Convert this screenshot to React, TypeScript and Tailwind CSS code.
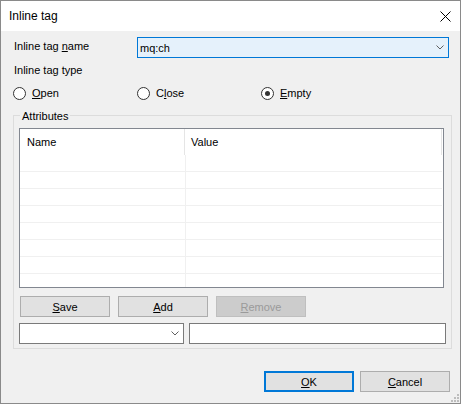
import React from "react";

const font = { fontFamily: '"Liberation Sans", Arial, sans-serif' };

function Chevron() {
  return (
    <svg width="8" height="5" viewBox="0 0 8 5" className="shrink-0">
      <path d="M0.5 0.5 L4 4 L7.5 0.5" fill="none" stroke="#606060" strokeWidth="1" />
    </svg>
  );
}

function Radio({ label, u, checked }: { label: string; u: number; checked?: boolean }) {
  return (
    <div className="flex w-[124px] items-center">
      <div className="flex h-[13px] w-[13px] items-center justify-center rounded-full border border-[#333333] bg-white">
        {checked && <div className="h-[5px] w-[5px] rounded-full bg-[#333333]" />}
      </div>
      <span className="ml-[6px]">
        {label.slice(0, u)}
        <u>{label[u]}</u>
        {label.slice(u + 1)}
      </span>
    </div>
  );
}

function Btn({ label, disabled }: { label: string; disabled?: boolean }) {
  return (
    <div
      className={
        disabled
          ? "flex h-[21px] w-[90px] items-center justify-center border border-[#bfbfbf] bg-[#cccccc] text-[#9a9a9a]"
          : "flex h-[21px] w-[90px] items-center justify-center border border-[#adadad] bg-[#e1e1e1]"
      }
    >
      <span>
        <u>{label[0]}</u>
        {label.slice(1)}
      </span>
    </div>
  );
}

export default function App() {
  const rows = [0, 1, 2, 3, 4, 5, 6];
  return (
    <div
      style={font}
      className="relative flex h-[404px] w-[461px] flex-col border border-[#8a8a8a] bg-[#f0f0f0] text-[11px] leading-[14px] text-black"
    >
      {/* title bar */}
      <div className="flex h-[30px] items-center justify-between bg-white pl-[8px] pr-[9px]">
        <span className="text-[12px]">Inline tag</span>
        <svg width="11" height="11" viewBox="0 0 11 11">
          <path d="M0.5 0.5 L10.5 10.5 M10.5 0.5 L0.5 10.5" stroke="#000" strokeWidth="1" />
        </svg>
      </div>

      <div className="flex flex-col pl-[12px]">
        <div className="mt-[6px] flex h-[21px] items-start">
          <div className="w-[124px] pl-[1px] pt-[2px]">
            Inline tag <u>n</u>ame
          </div>
          <div className="flex h-[21px] w-[312px] items-center justify-between border border-[#0078d7] bg-[#e5f1fb] pl-[2px] pr-[4px]">
            <span>mq:ch</span>
            <Chevron />
          </div>
        </div>

        <div className="mt-[5px] pl-[1px]">Inline tag type</div>

        <div className="mt-[9px] flex h-[14px]">
          <Radio label="Open" u={0} />
          <Radio label="Close" u={1} />
          <Radio label="Empty" u={0} checked />
        </div>

        {/* Attributes group */}
        <div className="relative mt-[15px] flex w-[439px] flex-col border border-[#dcdcdc] pb-[4px] pl-[5px] pt-[12px]">
          <span className="absolute left-[6px] top-[-7px] bg-[#f0f0f0] px-[2px]">Attributes</span>

          <div className="flex h-[160px] w-[425px] flex-col border border-[#828790] bg-white">
            <div className="flex h-[26px] items-center">
              <div className="flex h-full w-[165px] items-center border-r border-[#e5e5e5] pl-[7px]">Name</div>
              <div className="flex h-full flex-1 items-center border-r border-[#e5e5e5] pl-[6px] mr-[1px]">Value</div>
            </div>
            <div className="flex flex-1">
              <div className="flex w-[166px] flex-col border-r border-[#f0f0f0]">
                {rows.map((r) => (
                  <div key={r} className="h-[17px] border-b border-[#f0f0f0]" />
                ))}
              </div>
              <div className="mr-[1px] flex flex-1 flex-col">
                {rows.map((r) => (
                  <div key={r} className="h-[17px] border-b border-[#f0f0f0]" />
                ))}
              </div>
            </div>
          </div>

          <div className="mt-[8px] flex gap-[8px] pl-[1px]">
            <Btn label="Save" />
            <Btn label="Add" />
            <Btn label="Remove" disabled />
          </div>

          <div className="mt-[6px] flex gap-[5px]">
            <div className="flex h-[21px] w-[165px] items-center justify-end border border-[#7a7a7a] bg-white pr-[4px]">
              <Chevron />
            </div>
            <div className="h-[21px] w-[257px] border border-[#7a7a7a] bg-white" />
          </div>
        </div>
      </div>

      {/* footer */}
      <div className="mt-auto flex justify-end gap-[6px] pb-[11px] pr-[10px]">
        <div className="flex h-[21px] w-[90px] items-center justify-center border-2 border-[#0078d7] bg-[#e1e1e1]">
          <span>
            <u>O</u>K
          </span>
        </div>
        <div className="flex h-[21px] w-[90px] items-center justify-center border border-[#adadad] bg-[#e1e1e1]">
          <span>
            <u>C</u>ancel
          </span>
        </div>
      </div>

      {/* size grip */}
      <svg width="9" height="9" viewBox="0 0 9 9" className="absolute bottom-[1px] right-[1px]">
        <g fill="#bdbdbd">
          <rect x="7" y="1" width="2" height="2" />
          <rect x="4" y="4" width="2" height="2" />
          <rect x="7" y="4" width="2" height="2" />
          <rect x="1" y="7" width="2" height="2" />
          <rect x="4" y="7" width="2" height="2" />
          <rect x="7" y="7" width="2" height="2" />
        </g>
      </svg>
    </div>
  );
}
